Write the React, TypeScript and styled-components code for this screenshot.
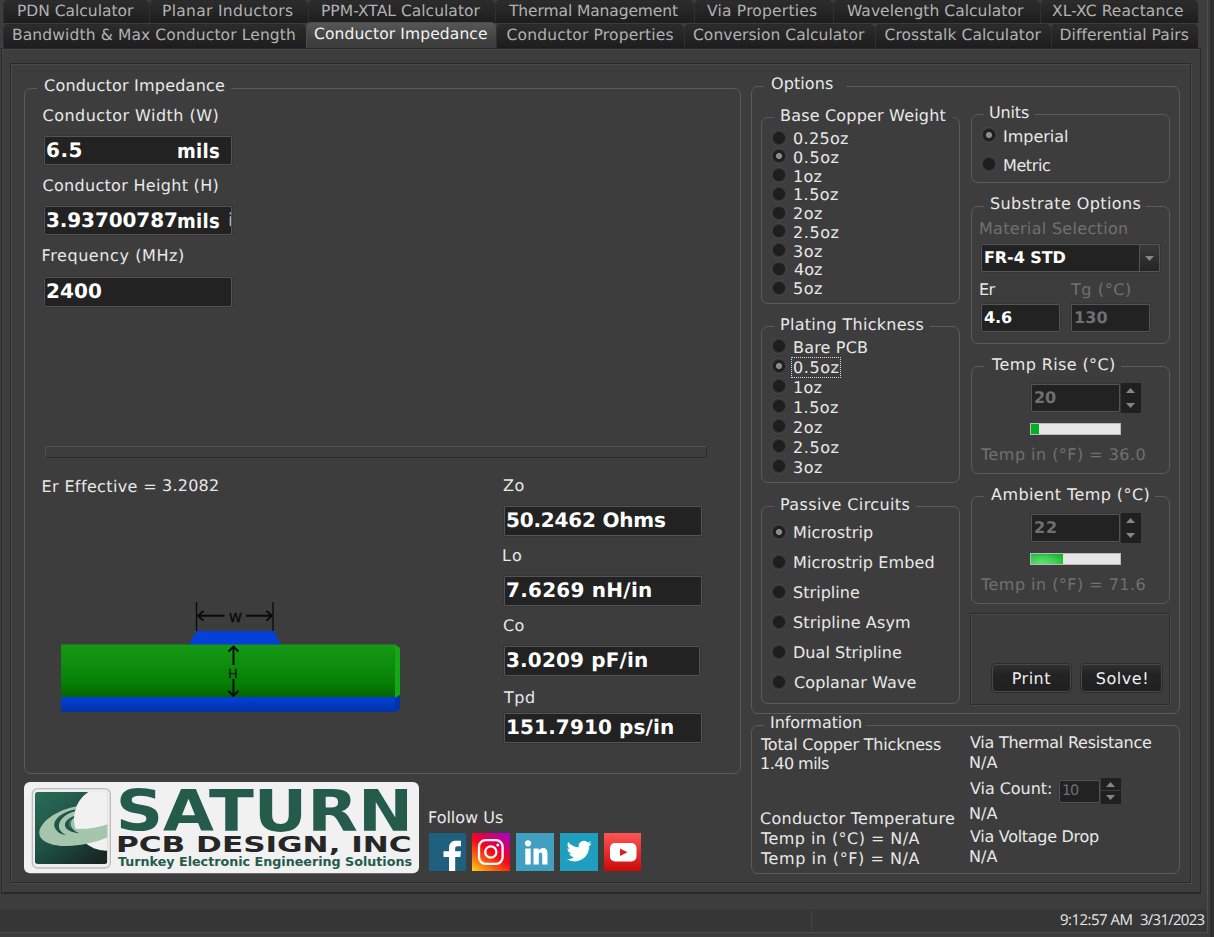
import React from 'react';
import styled, { createGlobalStyle, css } from 'styled-components';

const GlobalStyle = createGlobalStyle`
  html, body { margin: 0; padding: 0; background: #3d3d3d; }
  body { width: 1214px; height: 937px; overflow: hidden; font-family: "DejaVu Sans", Verdana, sans-serif; color: #e8e8e8; }
  * { box-sizing: border-box; }
`;

/* ---------- text fitted to a given ink width ---------- */

const FAMILY = '"DejaVu Sans", Verdana, sans-serif';
const CONDENSED = '"DejaVu Sans Condensed", "DejaVu Sans", Tahoma, sans-serif';
const STATUS = '"Open Sans", "Noto Sans", sans-serif';

const pen = document.createElement('canvas').getContext('2d')!;

function measure(text: string, font: string, width: number) {
  pen.font = font;
  const m = pen.measureText(text);
  const ink = m.actualBoundingBoxRight + m.actualBoundingBoxLeft;
  return {
    spacing: text.length > 1 ? (width - ink) / (text.length - 1) : 0,
    bearing: m.actualBoundingBoxLeft,
  };
}

interface LineProps {
  $w: number;
  $size: number;
  $bold?: boolean;
  $mt?: number;
  $ml?: number;
  $lh: number;
  $color?: string;
  $family: string;
}

const Line = styled.div<LineProps>`
  flex: none;
  width: ${p => p.$w}px;
  height: ${p => p.$lh}px;
  line-height: ${p => p.$lh}px;
  margin-top: ${p => p.$mt ?? 0}px;
  margin-left: ${p => p.$ml ?? 0}px;
  font-family: ${p => p.$family};
  font-size: ${p => p.$size}px;
  font-weight: ${p => (p.$bold ? 700 : 400)};
  color: ${p => p.$color ?? 'inherit'};
  white-space: pre;
  text-rendering: geometricPrecision;
`;

interface TProps {
  children: string;
  w: number;
  size?: number;
  bold?: boolean;
  mt?: number;
  ml?: number;
  lh?: number;
  color?: string;
  family?: string;
}

function T({ children, w, size = 16, bold, mt, ml, lh, color, family = FAMILY }: TProps) {
  const fit = measure(children, `${bold ? 700 : 400} ${size}px ${family}`, w);
  return (
    <Line $w={w} $size={size} $bold={bold} $mt={mt} $ml={ml} $lh={lh ?? (size >= 19 ? 24 : 19)} $color={color} $family={family}
      style={{ letterSpacing: fit.spacing, textIndent: fit.bearing }}>
      {children}
    </Line>
  );
}

const DIM = '#707070';

/* ---------- window frame ---------- */

const Window = styled.div`
  display: flex;
  width: 1214px;
  height: 937px;
  background: #3d3d3d;
  overflow: hidden;
`;

const Main = styled.div`
  width: 1208px;
  height: 933px;
  border-right: 1px solid #505050;
  border-bottom: 1px solid #4c4c4c;
  display: flex;
  flex-direction: column;
`;

const Edge = styled.div`
  flex: 1;
  margin-left: 2px;
  background: #2f2f2f;
`;

const Frame = styled.div`
  width: 1214px;
  height: 937px;
  background: #303030;
  display: flex;
`;

const Tabs = styled.div`
  height: 48px;
  padding-left: 3px;
  flex: none;
`;

const TabRow = styled.div`
  display: flex;
  height: 24px;
  width: 1196px;
`;

const Tab = styled.div<{ $w: number; $pad: number; $active?: boolean; $second?: boolean }>`
  width: ${p => p.$w}px;
  height: ${p => (p.$second ? 24 : 23)}px;
  padding-left: ${p => p.$pad}px;
  padding-top: 1px;
  border-radius: 5px 5px 0 0;
  color: #b2b2b2;
  background: linear-gradient(#2c2c2c, #1d1d1d);
  border-left: 1px solid #303030;
  border-top: 1px solid #2a2a2a;
  ${p => p.$active && css`
    height: 26px;
    margin-top: -2px;
    padding-top: 2px;
    color: #f2f2f2;
    border-color: #4c4c4c;
    background: linear-gradient(#565656, #3d3d3d 80%);
    z-index: 1;
  `}
`;

const Sheet = styled.div`
  flex: none;
  margin-left: 1px;
  width: 1200px;
  height: 846px;
  border: 1px solid #292929;
  border-bottom-width: 2px;
  box-shadow: inset 1px 1px 0 #464646;
  padding: 14px 0 0 8px;
`;

const Bevel = styled.div`
  width: 1181px;
  height: 820px;
  border: 1px solid #2a2a2a;
  box-shadow: inset 1px 1px 0 #4a4a4a, 1px 1px 0 #4a4a4a;
  padding: 0 0 0 13px;
  display: flex;
`;

const StatusBar = styled.div`
  margin-top: 15px;
  height: 23px;
  background: #363636;
  display: flex;
  padding-left: 811px;
`;

const StatusRule = styled.div`
  width: 1px;
  height: 19px;
  margin: 2px 248px 0 0;
  background: #454545;
`;

/* ---------- group boxes ---------- */

const Fieldset = styled.fieldset<{ $w: number; $h: number; $mt?: number; $ml?: number }>`
  flex: none;
  min-width: 0;
  width: ${p => p.$w}px;
  height: ${p => p.$h}px;
  margin: ${p => p.$mt ?? 0}px 0 0 ${p => p.$ml ?? 0}px;
  padding: 0;
  border: 1px solid #5b5b5b;
  border-radius: 7px;
`;

const Legend = styled.legend<{ $gap: number; $drop: number; $pad: number }>`
  margin-left: 12px;
  width: ${p => p.$gap}px;
  padding: 0 0 ${p => p.$drop}px ${p => p.$pad}px;
`;

interface GroupProps {
  title: string; tw: number; gap: number; drop?: number; pad?: number;
  w: number; h: number; mt?: number; ml?: number; children?: React.ReactNode;
}

function Group({ title, tw, gap, drop = 4, pad = 7, w, h, mt, ml, children }: GroupProps) {
  return (
    <Fieldset $w={w} $h={h} $mt={mt} $ml={ml}>
      <Legend $gap={gap} $drop={drop} $pad={pad}><T w={tw}>{title}</T></Legend>
      {children}
    </Fieldset>
  );
}

/* ---------- layout helpers ---------- */

const Column = styled.div<{ $w?: number; $ml?: number; $mt?: number }>`
  display: flex;
  flex-direction: column;
  flex: none;
  ${p => p.$w && `width: ${p.$w}px;`}
  margin-left: ${p => p.$ml ?? 0}px;
  margin-top: ${p => p.$mt ?? 0}px;
`;

const Row = styled.div<{ $ml?: number; $mt?: number }>`
  display: flex;
  align-items: flex-start;
  margin-left: ${p => p.$ml ?? 0}px;
  margin-top: ${p => p.$mt ?? 0}px;
`;

/* ---------- controls ---------- */

const Field = styled.div<{ $w: number; $h: number; $mt?: number; $ml?: number; $pt?: number; $pl?: number }>`
  flex: none;
  display: flex;
  align-items: flex-start;
  width: ${p => p.$w}px;
  height: ${p => p.$h}px;
  margin-top: ${p => p.$mt ?? 0}px;
  margin-left: ${p => p.$ml ?? 0}px;
  padding: ${p => p.$pt ?? 1}px 0 0 ${p => p.$pl ?? 2}px;
  background: #222;
  border: 1px solid #545454;
  border-radius: 1px;
  box-shadow: 0 0 0 1px #363636;
  color: #fff;
  overflow: hidden;
`;

const Divider = styled.div`
  width: 662px;
  height: 12px;
  margin: 139px 0 0 20px;
  border: 1px solid;
  border-color: #505050 #2b2b2b #2b2b2b #505050;
`;

const Dot = styled.span<{ $on?: boolean; $mt: number }>`
  flex: none;
  width: 16px;
  height: 16px;
  margin-top: ${p => p.$mt}px;
  border-radius: 50%;
  border: 1px solid #4a4a4a;
  box-shadow: inset 0 0 0 1px #343434;
  background: ${p => (p.$on ? 'radial-gradient(circle, #8c8c8c 0 2.6px, #1e1e1e 3.6px)' : '#1e1e1e')};
`;

const RadioRow = styled.label<{ $h: number }>`
  display: flex;
  align-items: flex-start;
  height: ${p => p.$h}px;
  padding-left: 9px;
`;

const RadioText = styled.span<{ $focus?: boolean }>`
  padding-left: 7px;
  ${p => p.$focus && css`
    margin: -1px 0 0 4px;
    padding: 0 1px 0 2px;
    height: 21px;
    border: 1px dotted #dcdcdc;
  `}
`;

interface Option { label: string; w: number; on?: boolean; focus?: boolean }

function Radios({ items, pitch, dot }: { items: Option[]; pitch: number; dot: number }) {
  return (
    <>
      {items.map(o => (
        <RadioRow key={o.label} $h={pitch}>
          <Dot $on={o.on} $mt={dot} />
          <RadioText $focus={o.focus}><T w={o.w}>{o.label}</T></RadioText>
        </RadioRow>
      ))}
    </>
  );
}

const SelectArrow = styled.div`
  width: 20px;
  height: 26px;
  margin: -3px 0 0 auto;
  border-left: 1px solid #545454;
  background: linear-gradient(#3a3a3a, #242424);
  display: flex;
  align-items: center;
  justify-content: center;
`;

const Steps = styled.div<{ $h: number; $split?: boolean }>`
  width: 20px;
  height: ${p => p.$h}px;
  margin-left: 1px;
  background: ${p => (p.$split
    ? 'linear-gradient(#202020 0 12px, #3d3d3d 12px 13px, #202020 13px)'
    : '#202020')};
  display: flex;
  flex-direction: column;
  align-items: center;
  justify-content: space-between;
  padding: ${p => (p.$split ? '4px 1px 4px 0' : '5px 1px 5px 0')};
`;

const Triangle = ({ down }: { down?: boolean }) => (
  <svg width="9" height="5" viewBox="0 0 9 5">
    <path d={down ? 'M0 0H9L4.5 5Z' : 'M0 5H9L4.5 0Z'} fill="#858585" />
  </svg>
);

const Track = styled.div`
  width: 91px;
  height: 12px;
  margin: 10px 0 0 58px;
  border: 1px solid #b9b9b9;
  background: #e6e6e6;
`;

const Fill = styled.div<{ $w: number; $soft?: boolean }>`
  width: ${p => p.$w}px;
  height: 10px;
  background: ${p => (p.$soft
    ? 'radial-gradient(ellipse at 35% 90%, #66dc78 0, #43cd56 45%, #10b52c 90%)'
    : '#06b025')};
`;

const ButtonPanel = styled.div`
  width: 200px;
  height: 92px;
  margin: 9px 0 0 -1px;
  padding: 49px 0 0 21px;
  border: 1px solid #2c2c2c;
  box-shadow: inset 1px 1px 0 #4a4a4a, 1px 1px 0 #4a4a4a;
  display: flex;
  gap: 10px;
`;

const PushButton = styled.button<{ $w: number }>`
  width: ${p => p.$w}px;
  height: 28px;
  margin-top: 1px;
  padding: 0;
  display: flex;
  justify-content: center;
  align-items: flex-start;
  padding-top: 4px;
  color: #f0f0f0;
  border: 1px solid #484848;
  border-radius: 4px;
  background: linear-gradient(#303030, #232323 35%, #202020);
  box-shadow: 0 0 0 1px #2d2d2d;
`;

const Social = styled.div`
  display: flex;
  gap: 6px;
  margin-top: 6px;
`;

const Tile = styled.div<{ $bg: string }>`
  width: 37.8px;
  height: 38px;
  background: ${p => p.$bg};
  svg { display: block; }
`;

/* ---------- drawings ---------- */

const Logo = () => (
  <svg width="395" height="92" viewBox="40 36 1185 276" overflow="visible" fontFamily={FAMILY} fontWeight="700">
    <defs>
      <linearGradient id="sq" x1="0" y1="0" x2="0.8" y2="1">
        <stop offset="0" stopColor="#2a6b58" />
        <stop offset="0.5" stopColor="#1f5446" />
        <stop offset="1" stopColor="#172823" />
      </linearGradient>
      <clipPath id="sqc"><rect x="73" y="66" width="217" height="216" rx="8" /></clipPath>
    </defs>
    <rect x="40" y="36" width="1185" height="274" rx="18" fill="#f1f1f1" />
    <rect x="65" y="56" width="234" height="238" rx="16" fill="#ededed" stroke="#bdbdbd" strokeWidth="4" />
    <g clipPath="url(#sqc)">
      <rect x="73" y="66" width="217" height="216" fill="url(#sq)" />
      <circle cx="286" cy="146" r="96" fill="#f1f1f1" />
      <path d="M200 109C134 120 84 160 86 191C89 222 148 233 198 226C240 221 270 211 292 201V162C262 172 228 178 195 176L191 150Z" fill="#a5c6ac" />
      <path d="M197 118C156 124 128 148 131 168C134 184 150 194 168 196C152 188 143 178 145 164C148 145 172 128 194 124Z" fill="#1f5446" />
      <path d="M192 137C168 146 160 158 164 170C169 182 186 187 206 190C192 184 184 176 182 168C179 158 182 148 190 144Z" fill="#1f5446" />
      <path d="M182 147C174 154 172 164 178 171C186 179 200 184 214 183C200 180 190 174 187 166Z" fill="#a5c6ac" opacity="0.35" />
      <path d="M204 98C190 120 186 150 195 176C228 178 262 172 292 162V66H236C222 74 212 84 204 98Z" fill="#f1f1f1" />
    </g>
    <text x="315" y="184" fontSize="171" fill="#245b4b" textLength="892" lengthAdjust="spacingAndGlyphs">SATURN</text>
    <text x="316" y="246" fontSize="62" fill="#262626" textLength="887" lengthAdjust="spacingAndGlyphs">PCB DESIGN, INC</text>
    <text x="322" y="289" fontSize="36" fill="#245b4b" textLength="882" lengthAdjust="spacingAndGlyphs">Turnkey Electronic Engineering Solutions</text>
  </svg>
);

const DiagramSvg = styled.svg`
  display: block;
  margin: 104px 0 0 35px;
`;

const Diagram = () => (
  <DiagramSvg width="342" height="114" viewBox="60 600 342 114">
    <defs>
      <linearGradient id="core" x1="0" y1="0" x2="0" y2="1">
        <stop offset="0" stopColor="#159a15" />
        <stop offset="0.75" stopColor="#067f06" />
        <stop offset="1" stopColor="#036303" />
      </linearGradient>
      <linearGradient id="plane" x1="0" y1="0" x2="0" y2="1">
        <stop offset="0" stopColor="#0440d8" />
        <stop offset="1" stopColor="#0233a4" />
      </linearGradient>
    </defs>
    <path d="M196.500 631H274L281 645H188.500Z" fill="#0540d9" />
    <path d="M61 644.500H395V697H61Z" fill="url(#core)" />
    <path d="M395 644.500L400 648V695L395 698Z" fill="#14a814" />
    <path d="M61 697H395V712H61Z" fill="url(#plane)" />
    <path d="M395 698L400 695V709L396 712H395Z" fill="#0234b0" />
    <g stroke="#0a0a0a" strokeWidth="1.300" fill="none">
      <path d="M196.500 602V631M273 602V631" />
      <path d="M198 615.800H224.500M203.500 611L198 615.800L203.500 620.600M246 615.800H272M266.500 611L272 615.800L266.500 620.600" strokeWidth="1.900" />
      <path d="M233.500 647V665M228.500 651.500L233.500 646.500L238.500 651.500M233.500 679V696M228.500 691L233.500 696L238.500 691" strokeWidth="1.900" />
    </g>
    <text x="229" y="621.500" fontFamily={FAMILY} fontSize="13" fill="#0a0a0a" stroke="#0a0a0a" strokeWidth="0.4">W</text>
    <text x="228" y="677.500" fontFamily={FAMILY} fontSize="13" fill="#052805" stroke="#052805" strokeWidth="0.4">H</text>
  </DiagramSvg>
);

const Facebook = () => (
  <svg width="38" height="38" viewBox="0 0 38 38">
    <path d="M20 38V24H14.500V18.300H20V15C20 10.300 22.600 7.700 27 7.700H32V13.200H28.600C27 13.200 26.200 14 26.200 15.500V18.300H32L31.300 24H26.200V38Z" fill="#fff" />
  </svg>
);

const Instagram = () => (
  <svg width="38" height="38" viewBox="0 0 38 38" fill="none" stroke="#fff" strokeWidth="2.300">
    <rect x="7" y="7.200" width="23.600" height="23.600" rx="6.500" />
    <circle cx="18.800" cy="19" r="5.600" />
    <circle cx="25.800" cy="12" r="1.500" fill="#fff" stroke="none" />
  </svg>
);

const LinkedIn = () => (
  <svg width="38" height="38" viewBox="0 0 38 38" fill="#fff">
    <circle cx="12" cy="10.300" r="3.100" />
    <path d="M9.300 15.500H14.700V31.500H9.300ZM17.500 15.500H22.600V17.600C23.600 16 25.200 15.100 27.200 15.100C30.500 15.100 31.500 17.600 31.500 21V31.500H26.200V22.500C26.200 20.600 25.700 19.600 24.600 19.600C23.300 19.600 22.800 20.700 22.800 22.500V31.500H17.500Z" />
  </svg>
);

const Twitter = () => (
  <svg width="38" height="38" viewBox="0 0 38 38">
    <path transform="translate(6.500 5.600) scale(1.050)" fill="#fff" d="M23.950 4.570a10 10 0 01-2.820.770 4.960 4.960 0 002.160-2.720c-.950.550-2 .950-3.130 1.180a4.920 4.920 0 00-8.380 4.480C7.690 8.100 4.070 6.130 1.640 3.160a4.820 4.820 0 00-.670 2.480c0 1.710.870 3.210 2.190 4.100a4.900 4.900 0 01-2.230-.620v.060a4.920 4.920 0 003.950 4.830 5 5 0 01-2.210.080 4.940 4.940 0 004.600 3.420A9.870 9.870 0 010 19.540a13.990 13.990 0 007.550 2.210c9.050 0 14-7.500 14-13.980 0-.210 0-.420-.020-.630a9.940 9.940 0 002.460-2.550z" />
  </svg>
);

const YouTube = () => (
  <svg width="38" height="38" viewBox="0 0 38 38">
    <rect x="6" y="10" width="26.500" height="18.500" rx="5" fill="#fff" />
    <path d="M16 15.500V23L23.500 19.300Z" fill="#e02020" />
  </svg>
);

/* ---------- data ---------- */

const TABS_TOP = [
  { t: 'PDN Calculator', w: 146, pad: 14, tw: 116 },
  { t: 'Planar Inductors', w: 159, pad: 13, tw: 130 },
  { t: 'PPM-XTAL Calculator', w: 187, pad: 13, tw: 158.5 },
  { t: 'Thermal Management', w: 199, pad: 12, tw: 170 },
  { t: 'Via Properties', w: 139, pad: 12, tw: 110 },
  { t: 'Wavelength Calculator', w: 207, pad: 13, tw: 177 },
  { t: 'XL-XC Reactance', w: 158, pad: 11, tw: 131 },
];

const TABS_BOTTOM = [
  { t: 'Bandwidth & Max Conductor Length', w: 303, pad: 9, tw: 282 },
  { t: 'Conductor Impedance', w: 190, pad: 7, tw: 173, active: true },
  { t: 'Conductor Properties', w: 188, pad: 9.5, tw: 167 },
  { t: 'Conversion Calculator', w: 191, pad: 8, tw: 172 },
  { t: 'Crosstalk Calculator', w: 176, pad: 8.5, tw: 157 },
  { t: 'Differential Pairs', w: 147, pad: 8.5, tw: 128 },
];

const COPPER: Option[] = [
  { label: '0.25oz', w: 54 }, { label: '0.5oz', w: 44.5, on: true }, { label: '1oz', w: 27.5 },
  { label: '1.5oz', w: 44 }, { label: '2oz', w: 28 }, { label: '2.5oz', w: 44.5 },
  { label: '3oz', w: 28 }, { label: '4oz', w: 28 }, { label: '5oz', w: 28 },
];

const PLATING: Option[] = [
  { label: 'Bare PCB', w: 73 }, { label: '0.5oz', w: 44.5, on: true, focus: true }, { label: '1oz', w: 27.5 },
  { label: '1.5oz', w: 44 }, { label: '2oz', w: 28 }, { label: '2.5oz', w: 44.5 }, { label: '3oz', w: 28 },
];

const CIRCUITS: Option[] = [
  { label: 'Microstrip', w: 79, on: true }, { label: 'Microstrip Embed', w: 139.5 }, { label: 'Stripline', w: 65 },
  { label: 'Stripline Asym', w: 116 }, { label: 'Dual Stripline', w: 107 }, { label: 'Coplanar Wave', w: 121.5 },
];

function TempGroup({ title, tw, gap, value, fill, soft, note }: {
  title: string; tw: number; gap: number; value: string; fill: number; soft?: boolean; note: string;
}) {
  return (
    <Group title={title} tw={tw} gap={gap} w={199} h={119} mt={11}>
      <Row $ml={59} $mt={5}>
        <Field $w={89} $h={28} $mt={1} $pt={3} $pl={3}><T w={21} bold color={DIM}>{value}</T></Field>
        <Steps $h={30}><Triangle /><Triangle down /></Steps>
      </Row>
      <Track><Fill $w={fill} $soft={soft} /></Track>
      <T w={165.5} mt={10} ml={8} color={DIM}>{note}</T>
    </Group>
  );
}

export default function App() {
  return (
    <Frame>
      <GlobalStyle />
      <Window>
        <Main>
          <Tabs>
            <TabRow>
              {TABS_TOP.map(t => (
                <Tab key={t.t} $w={t.w} $pad={t.pad}><T w={t.tw} size={15.5} lh={18}>{t.t}</T></Tab>
              ))}
            </TabRow>
            <TabRow>
              {TABS_BOTTOM.map(t => (
                <Tab key={t.t} $w={t.w} $pad={t.pad} $active={t.active} $second>
                  <T w={t.tw} size={15.5} lh={18}>{t.t}</T>
                </Tab>
              ))}
            </TabRow>
          </Tabs>

          <Sheet>
            <Bevel>
              <Column $w={717} $mt={12}>
                <Group title="Conductor Impedance" tw={180} gap={194} drop={6} w={717} h={698}>
                  <T w={175} mt={5} ml={17.5}>Conductor Width (W)</T>
                  <Field $w={188} $h={29} $mt={11} $ml={19}>
                    <T w={34.5} size={20} bold>6.5</T>
                    <T w={41} size={20} bold mt={1} ml={96.5} family={CONDENSED}>mils</T>
                  </Field>
                  <T w={175} mt={11} ml={17.5}>Conductor Height (H)</T>
                  <Field $w={188} $h={29} $mt={11} $ml={19}>
                    <T w={130} size={20} bold>3.93700787</T>
                    <T w={41} size={20} bold mt={1} ml={1} family={CONDENSED}>mils</T>
                    <T w={3} size={18} mt={1} ml={10} lh={24} color="#b8b8b8">i</T>
                  </Field>
                  <T w={140.5} mt={11} ml={17.5}>Frequency (MHz)</T>
                  <Field $w={188} $h={30} $mt={12} $ml={19}>
                    <T w={54} size={20} bold>2400</T>
                  </Field>

                  <Divider />

                  <Row>
                    <Column $w={477}>
                      <Row $mt={18} $ml={17.5}>
                        <T w={112.5} mt={1}>Er Effective =</T>
                        <T w={55} ml={8}>3.2082</T>
                      </Row>
                      <Diagram />
                    </Column>
                    <Column>
                      <T w={20.5} mt={18} ml={1}>Zo</T>
                      <Field $w={198} $h={30} $mt={11} $ml={2}><T w={158} size={20} bold>50.2462 Ohms</T></Field>
                      <T w={18} mt={10} ml={1}>Lo</T>
                      <Field $w={198} $h={30} $mt={11} $ml={2}><T w={144} size={20} bold>7.6269 nH/in</T></Field>
                      <T w={20.5} mt={10} ml={1}>Co</T>
                      <Field $w={196} $h={30} $mt={11} $ml={2}><T w={140} size={20} bold>3.0209 pF/in</T></Field>
                      <T w={31} mt={12} ml={1}>Tpd</T>
                      <Field $w={198} $h={30} $mt={6} $ml={2} $pl={3}><T w={165} size={20} bold>151.7910 ps/in</T></Field>
                    </Column>
                  </Row>
                </Group>

                <Row $mt={8} $ml={-0.5}>
                  <Logo />
                  <Column $ml={10} $mt={26}>
                    <T w={74} ml={0.5}>Follow Us</T>
                    <Social>
                      <Tile $bg="#20607f"><Facebook /></Tile>
                      <Tile $bg="linear-gradient(35deg, #fccc20 2%, #fb6a10 25%, #f50a18 50%, #e0004c 66%, #b000b8 92%)"><Instagram /></Tile>
                      <Tile $bg="#419fc2"><LinkedIn /></Tile>
                      <Tile $bg="#1f9fc0"><Twitter /></Tile>
                      <Tile $bg="linear-gradient(#ff5555, #cc0808)"><YouTube /></Tile>
                    </Social>
                  </Column>
                </Row>
              </Column>

              <Column $w={429} $ml={10} $mt={10}>
                <Group title="Options" tw={62} gap={82} drop={6} w={429} h={640}>
                  <Row $mt={-1}>
                    <Column $w={199} $ml={9} $mt={8}>
                      <Group title="Base Copper Weight" tw={164.5} gap={179} w={199} h={198}>
                        <Radios items={COPPER} pitch={18.75} dot={0.5} />
                      </Group>
                      <Group title="Plating Thickness" tw={142.5} gap={156} w={199} h={168} mt={11}>
                        <Radios items={PLATING} pitch={20} dot={0} />
                      </Group>
                      <Group title="Passive Circuits" tw={128.5} gap={142} w={199} h={209} mt={12}>
                        <Column $mt={5}><Radios items={CIRCUITS} pitch={30} dot={0.5} /></Column>
                      </Group>
                    </Column>

                    <Column $w={199} $ml={11} $mt={5}>
                      <Group title="Units" tw={39} gap={51} pad={6} w={199} h={80}>
                        <Column $mt={1}>
                          <Radios items={[{ label: 'Imperial', w: 63, on: true }, { label: 'Metric', w: 46 }]} pitch={29} dot={0} />
                        </Column>
                      </Group>
                      <Group title="Substrate Options" tw={149.5} gap={162} drop={6} w={199} h={150} mt={11}>
                        <T w={147} ml={8} color={DIM}>Material Selection</T>
                        <Field $w={179} $h={28} $mt={6} $ml={9} $pt={3} $pl={3}>
                          <T w={80.5} bold>FR-4 STD</T>
                          <SelectArrow><Triangle down /></SelectArrow>
                        </Field>
                        <Row $mt={8} $ml={8}>
                          <T w={15.5}>Er</T>
                          <T w={60} ml={74.5} color={DIM}>Tg (°C)</T>
                        </Row>
                        <Row $mt={5} $ml={9}>
                          <Field $w={79} $h={28} $pt={3} $pl={2}><T w={28} bold>4.6</T></Field>
                          <Field $w={79} $h={28} $ml={11} $pt={3} $pl={3}><T w={32.5} bold color={DIM}>130</T></Field>
                        </Row>
                      </Group>
                      <TempGroup title="Temp Rise (°C)" tw={123} gap={137} value="20" fill={8} note="Temp in (°F) = 36.0" />
                      <TempGroup title="Ambient Temp (°C)" tw={157.5} gap={171} value="22" fill={32} soft note="Temp in (°F) = 71.6" />
                      <ButtonPanel>
                        <PushButton $w={79}><T w={37.5}>Print</T></PushButton>
                        <PushButton $w={81}><T w={49.5}>Solve!</T></PushButton>
                      </ButtonPanel>
                    </Column>
                  </Row>
                </Group>

                <Group title="Information" tw={90} gap={102} drop={6} w={429} h={161} mt={-1}>
                  <Row>
                    <Column $w={210} $ml={8}>
                      <T w={181} mt={-3}>Total Copper Thickness</T>
                      <T w={68} ml={1}>1.40 mils</T>
                      <T w={194} mt={36}>Conductor Temperature</T>
                      <T w={159.5} mt={1}>Temp in (°C) = N/A</T>
                      <T w={159.5} mt={1}>Temp in (°F) = N/A</T>
                    </Column>
                    <Column>
                      <T w={181} mt={-5}>Via Thermal Resistance</T>
                      <T w={27.5} mt={1}>N/A</T>
                      <Row $mt={6}>
                        <T w={81} mt={1}>Via Count:</T>
                        <Field $w={41} $h={23} $mt={2} $ml={8} $pt={1} $pl={3}><T w={16} size={14.5} color={DIM}>10</T></Field>
                        <Steps $h={26} $split><Triangle /><Triangle down /></Steps>
                      </Row>
                      <T w={27.5}>N/A</T>
                      <T w={129} mt={4}>Via Voltage Drop</T>
                      <T w={27.5} mt={1}>N/A</T>
                    </Column>
                  </Row>
                </Group>
              </Column>
            </Bevel>
          </Sheet>

          <StatusBar>
            <StatusRule />
            <T w={72.5} size={15} lh={23} family={STATUS}>9:12:57 AM</T>
            <T w={64.5} ml={7.5} size={15} lh={23} family={STATUS}>3/31/2023</T>
          </StatusBar>
        </Main>
        <Edge />
      </Window>
    </Frame>
  );
}
